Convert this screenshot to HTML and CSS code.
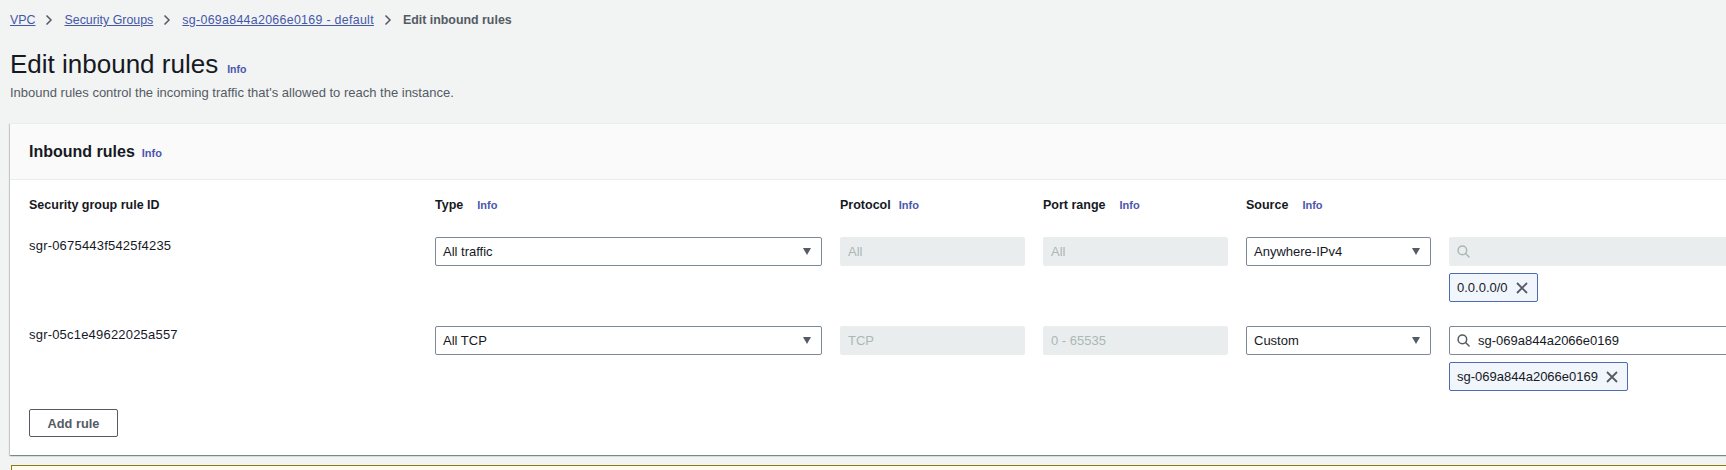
FILE: index.html
```html
<!DOCTYPE html>
<html lang="en">
<head>
<meta charset="utf-8">
<title>Edit inbound rules</title>
<link rel="stylesheet" href="styles.css">
</head>
<body>
<div class="page">
  <nav class="crumbs">
    <a class="crumb-link" href="#">VPC</a>
    <svg class="chev" viewBox="0 0 8 12"><path d="M1.5 1.5 L6 6 L1.5 10.5"/></svg>
    <a class="crumb-link" href="#">Security Groups</a>
    <svg class="chev" viewBox="0 0 8 12"><path d="M1.5 1.5 L6 6 L1.5 10.5"/></svg>
    <a class="crumb-link crumb-wide" href="#">sg-069a844a2066e0169 - default</a>
    <svg class="chev" viewBox="0 0 8 12"><path d="M1.5 1.5 L6 6 L1.5 10.5"/></svg>
    <span class="crumb-current">Edit inbound rules</span>
  </nav>

  <h1 class="title">Edit inbound rules<a class="info info-title" href="#">Info</a></h1>
  <p class="desc">Inbound rules control the incoming traffic that's allowed to reach the instance.</p>

  <section class="card">
    <div class="card-head">
      <h2 class="card-title">Inbound rules<a class="info info-head" href="#">Info</a></h2>
    </div>
    <div class="card-body">
      <div class="grid head-row">
        <div class="th">Security group rule ID</div>
        <div class="th">Type<a class="info info-col" href="#">Info</a></div>
        <div class="th">Protocol<a class="info info-col info-tight" href="#">Info</a></div>
        <div class="th">Port range<a class="info info-col" href="#">Info</a></div>
        <div class="th">Source<a class="info info-col" href="#">Info</a></div>
        <div class="th"></div>
      </div>

      <div class="grid rule-row">
        <div class="rid">sgr-0675443f5425f4235</div>
        <div class="field select"><span>All traffic</span><svg class="caret" viewBox="0 0 8 7"><path d="M0 0 H8 L4 7 Z"/></svg></div>
        <div class="field disabled">All</div>
        <div class="field disabled">All</div>
        <div class="field select"><span>Anywhere-IPv4</span><svg class="caret" viewBox="0 0 8 7"><path d="M0 0 H8 L4 7 Z"/></svg></div>
        <div class="src">
          <div class="field search disabled"><svg class="mag" viewBox="0 0 14 14"><circle cx="5.8" cy="5.8" r="4.6"/><path d="M9.2 9.2 L13 13"/></svg></div>
          <div class="token"><span>0.0.0.0/0</span><svg class="x" viewBox="0 0 12 12"><path d="M1 1 L11 11 M11 1 L1 11"/></svg></div>
        </div>
      </div>

      <div class="grid rule-row">
        <div class="rid">sgr-05c1e49622025a557</div>
        <div class="field select"><span>All TCP</span><svg class="caret" viewBox="0 0 8 7"><path d="M0 0 H8 L4 7 Z"/></svg></div>
        <div class="field disabled">TCP</div>
        <div class="field disabled">0 - 65535</div>
        <div class="field select"><span>Custom</span><svg class="caret" viewBox="0 0 8 7"><path d="M0 0 H8 L4 7 Z"/></svg></div>
        <div class="src">
          <div class="field search"><svg class="mag" viewBox="0 0 14 14"><circle cx="5.8" cy="5.8" r="4.6"/><path d="M9.2 9.2 L13 13"/></svg><span>sg-069a844a2066e0169</span></div>
          <div class="token"><span>sg-069a844a2066e0169</span><svg class="x" viewBox="0 0 12 12"><path d="M1 1 L11 11 M11 1 L1 11"/></svg></div>
        </div>
      </div>

      <button class="btn" type="button">Add rule</button>
    </div>
  </section>

  <div class="alert"></div>
</div>
</body>
</html>
```

FILE: styles.css
```css
html, body {
  margin: 0;
  padding: 0;
}

body {
  background: #f2f3f3;
  font-family: "Liberation Sans", Arial, sans-serif;
  color: #16191f;
  overflow: hidden;
}

.page {
  width: 1960px;
  padding: 11px 0 0 10px;
}

/* breadcrumbs */
.crumbs {
  display: flex;
  align-items: center;
  height: 18px;
  font-size: 12.4px;
  line-height: 18px;
}

.crumb-link {
  color: #4458a8;
  text-decoration: underline;
}

.crumb-wide {
  letter-spacing: 0.3px;
}

.chev {
  width: 8px;
  height: 12px;
  margin: 0 11px 0 10px;
  fill: none;
  stroke: #545b64;
  stroke-width: 1.5;
}

.crumb-current {
  font-weight: bold;
  color: #545b64;
}

/* page header */
.title {
  margin: 19px 0 0;
  height: 32px;
  font-size: 26px;
  line-height: 32px;
  font-weight: normal;
  color: #16191f;
}

.info {
  color: #4a57ad;
  font-weight: bold;
  text-decoration: none;
  font-size: 11px;
  line-height: 1;
}

.info-title {
  font-size: 10.5px;
  margin-left: 9px;
}

.info-head {
  margin-left: 7px;
}

.info-col {
  margin-left: 14px;
}

.info-tight {
  margin-left: 8px;
}

.desc {
  margin: 4px 0 0;
  font-size: 13px;
  line-height: 18px;
  color: #545b64;
}

/* card */
.card {
  margin-top: 21px;
  width: 1900px;
  background: #fff;
  box-shadow: 0 1px 1px 0 rgba(0, 28, 36, 0.3), 1px 1px 1px 0 rgba(0, 28, 36, 0.15), -1px 1px 1px 0 rgba(0, 28, 36, 0.15);
  border-top: 1px solid #eaeded;
}

.card-head {
  height: 55px;
  padding: 0 19px;
  display: flex;
  align-items: center;
  background: #fafafa;
  border-bottom: 1px solid #eaeded;
}

.card-title {
  margin: 0;
  font-size: 16px;
  line-height: 22px;
  font-weight: bold;
}

.card-body {
  padding: 16px 19px 18px;
}

.grid {
  display: grid;
  grid-template-columns: 388px 387px 185px 185px 185px 400px;
  column-gap: 18px;
  align-items: start;
}

.head-row {
  height: 18px;
  font-size: 12.5px;
  line-height: 18px;
  font-weight: bold;
}

.rule-row {
  margin-top: 23px;
  font-size: 13px;
}

.rule-row + .rule-row {
  margin-top: 24px;
}

.rid {
  line-height: 18px;
  color: #16191f;
  letter-spacing: 0.2px;
}

.field {
  box-sizing: border-box;
  height: 29px;
  display: flex;
  align-items: center;
  padding: 0 10px 0 7px;
  border: 1px solid #7d8998;
  border-radius: 2px;
  background: #fff;
  font-size: 13px;
  white-space: nowrap;
}

.select {
  justify-content: space-between;
}

.caret {
  width: 8px;
  height: 7px;
  fill: #545b64;
}

.disabled {
  background: #eaeded;
  border-color: #eaeded;
  color: #aab7b8;
}

.search {
  gap: 8px;
  padding-left: 7px;
}

.mag {
  width: 13px;
  height: 13px;
  fill: none;
  stroke: #545b64;
  stroke-width: 1.6;
  stroke-linecap: round;
}

.search.disabled .mag {
  stroke: #aab7b8;
}

.src {
  display: flex;
  flex-direction: column;
  align-items: flex-start;
}

.src .search {
  align-self: stretch;
}

.token {
  box-sizing: border-box;
  margin-top: 7px;
  height: 29px;
  display: inline-flex;
  align-items: center;
  gap: 8px;
  padding: 0 9px 0 7px;
  border: 1px solid #4d6db0;
  border-radius: 2px;
  background: #f1f6fc;
  font-size: 13px;
}

.x {
  width: 12px;
  height: 12px;
  fill: none;
  stroke: #545b64;
  stroke-width: 1.8;
}

.btn {
  display: block;
  margin-top: 18px;
  width: 89px;
  height: 28px;
  padding: 0;
  border: 1px solid #545b64;
  border-radius: 2px;
  background: #fff;
  color: #545b64;
  font-family: "Liberation Sans", Arial, sans-serif;
  font-size: 12.8px;
  font-weight: bold;
}

.alert {
  margin: 10px 0 0 1px;
  width: 1900px;
  height: 60px;
  background: #fffce9;
  border: 1px solid #8d7a14;
}
```
